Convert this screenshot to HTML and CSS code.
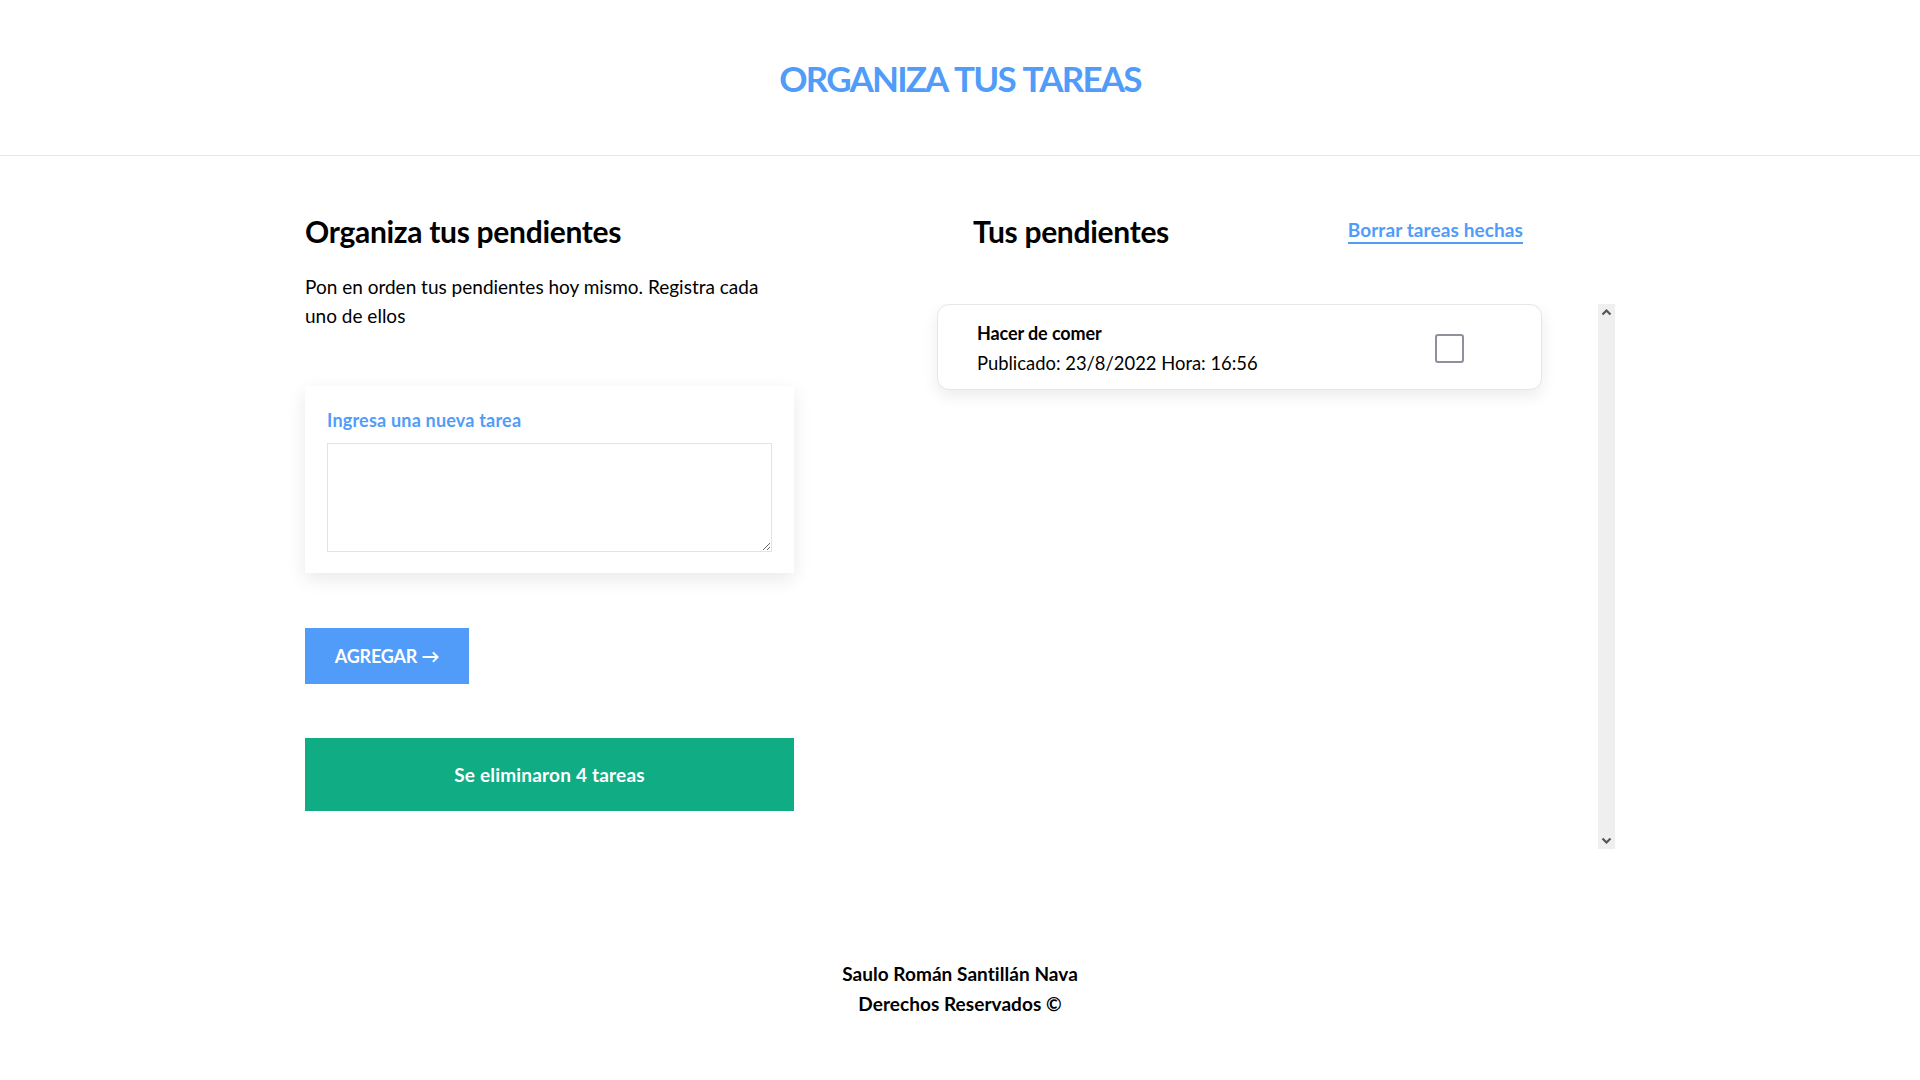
FILE: index.html
```html
<!DOCTYPE html>
<html lang="es">
<head>
<meta charset="utf-8">
<title>Organiza tus tareas</title>
<link rel="stylesheet" href="styles.css">
</head>
<body>
<header class="site-header">
  <h1 class="site-title">ORGANIZA TUS TAREAS</h1>
</header>
<main class="layout">
  <section class="col-left">
    <h2 class="section-title">Organiza tus pendientes</h2>
    <p class="intro">Pon en orden tus pendientes hoy mismo. Registra cada uno de ellos</p>
    <div class="form-card">
      <label class="form-label" for="tarea">Ingresa una nueva tarea</label>
      <textarea id="tarea" class="form-textarea"></textarea>
    </div>
    <button class="btn-add" type="button">AGREGAR →</button>
    <div class="alert-success">Se eliminaron 4 tareas</div>
  </section>
  <section class="col-right">
    <div class="list-header">
      <h2 class="section-title">Tus pendientes</h2>
      <a class="clear-link" href="#">Borrar tareas hechas</a>
    </div>
    <div class="list-frame">
      <div class="task-list">
        <div class="task-card">
          <div class="task-info">
            <div class="task-name">Hacer de comer</div>
            <div class="task-date">Publicado: 23/8/2022 Hora: 16:56</div>
          </div>
          <input class="task-check" type="checkbox">
        </div>
      </div>
      <div class="scroll-track" aria-hidden="true">
        <svg class="scroll-arrow" width="17" height="17" viewBox="0 0 17 17"><polyline points="4.5,10.5 8.5,6.5 12.5,10.5" fill="none" stroke="#555555" stroke-width="2.2"/></svg>
        <svg class="scroll-arrow" width="17" height="17" viewBox="0 0 17 17"><polyline points="4.5,6.5 8.5,10.5 12.5,6.5" fill="none" stroke="#555555" stroke-width="2.2"/></svg>
      </div>
    </div>
  </section>
</main>
<footer class="site-footer">
  <p class="footer-line">Saulo Román Santillán Nava</p>
  <p class="footer-line">Derechos Reservados ©</p>
</footer>
</body>
</html>
```
FILE: styles.css
```css
* { box-sizing: border-box; }

html, body {
  margin: 0;
  padding: 0;
  background: #ffffff;
  color: #000000;
  font-family: Lato, "Noto Sans", "Liberation Sans", sans-serif;
}

.site-header {
  border-bottom: 1px solid #e6e6e6;
  padding: 55px 0 54px;
  text-align: center;
}

.site-title {
  margin: 0;
  font-size: 35px;
  line-height: 46px;
  font-weight: 700;
  color: #519cf9;
  letter-spacing: -1.8px;
  word-spacing: 2px;
}

.layout {
  width: 1310px;
  margin: 0 auto;
  padding-top: 57px;
  display: grid;
  grid-template-columns: 489px 1fr;
  column-gap: 87px;
  align-items: start;
}

.section-title {
  margin: 0;
  font-size: 30px;
  line-height: 36px;
  font-weight: 700;
  letter-spacing: -0.3px;
}

.intro {
  margin: 23px 0 0;
  font-size: 19px;
  line-height: 29px;
  width: 480px;
}

.form-card {
  margin-top: 56px;
  background: #ffffff;
  padding: 23px 22px 21px;
  box-shadow: 0 6px 18px rgba(0, 0, 0, 0.09);
}

.form-label {
  display: block;
  font-size: 18px;
  line-height: 22px;
  font-weight: 700;
  color: #519cf9;
  letter-spacing: 0.2px;
}

.form-textarea {
  display: block;
  width: 100%;
  height: 109px;
  margin-top: 12px;
  border: 1px solid #e3e3e3;
  resize: vertical;
  font-family: inherit;
  font-size: 16px;
  padding: 8px;
}

.btn-add {
  display: block;
  margin-top: 55px;
  width: 164px;
  height: 56px;
  border: 0;
  background: #519cf9;
  color: #ffffff;
  font-family: inherit;
  font-size: 18px;
  font-weight: 700;
  letter-spacing: -0.2px;
  cursor: pointer;
}

.alert-success {
  margin-top: 54px;
  height: 73px;
  background: #10ac84;
  color: #ffffff;
  font-size: 19px;
  font-weight: 700;
  letter-spacing: 0.2px;
  display: flex;
  align-items: center;
  justify-content: center;
}

.list-header {
  display: flex;
  justify-content: space-between;
  align-items: flex-start;
  padding: 0 92px;
}

.clear-link {
  margin-top: 5px;
  font-size: 19px;
  line-height: 24px;
  font-weight: 700;
  color: #519cf9;
  text-decoration: none;
  border-bottom: 2px solid #519cf9;
  letter-spacing: 0.1px;
}

.list-frame {
  margin-top: 55px;
  height: 545px;
  display: flex;
}

.task-list {
  flex: 1;
  height: 100%;
  overflow: hidden;
  padding: 0 56px 20px;
}

.scroll-track {
  width: 17px;
  height: 100%;
  background: #efefef;
  display: flex;
  flex-direction: column;
  justify-content: space-between;
}

.scroll-arrow {
  display: block;
}

.task-card {
  display: flex;
  justify-content: space-between;
  align-items: center;
  border: 1px solid #e6e6e6;
  border-radius: 12px;
  padding: 13px 77px 11px 39px;
  box-shadow: 0 6px 16px rgba(0, 0, 0, 0.08);
  background: #ffffff;
}

.task-name {
  font-size: 18px;
  line-height: 30px;
  font-weight: 700;
  letter-spacing: -0.1px;
}

.task-date {
  font-size: 18.4px;
  line-height: 30px;
}

.task-check {
  appearance: none;
  -webkit-appearance: none;
  margin: 0;
  width: 29px;
  height: 29px;
  border: 2px solid #8f8f9d;
  border-radius: 3px;
  background: #ffffff;
}

.site-footer {
  padding-top: 110px;
  padding-bottom: 40px;
  text-align: center;
}

.footer-line {
  margin: 0;
  font-size: 19px;
  line-height: 30px;
  font-weight: 700;
  letter-spacing: 0.05px;
}
```
